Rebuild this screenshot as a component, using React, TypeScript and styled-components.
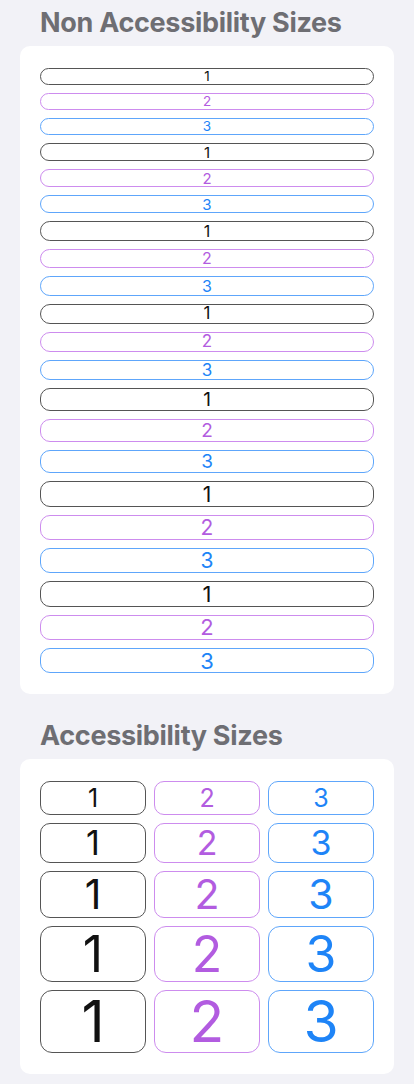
import React from "react";
import styled, { createGlobalStyle } from "styled-components";

const Global = createGlobalStyle`
  html, body { margin: 0; padding: 0; background: #f2f2f7; }
  body { font-family: Inter, "Noto Sans", sans-serif; -webkit-font-smoothing: antialiased; }
`;

const Page = styled.div`
  width: 414px;
  padding: 0 20px 10px;
  box-sizing: border-box;
  display: flex;
  flex-direction: column;
`;

const Title = styled.h2<{ $top: number }>`
  margin: ${(p) => p.$top}px 0 0;
  padding: 0 20px;
  font-size: 27px;
  line-height: 32px;
  font-weight: 700;
  color: #6e6e73;
  letter-spacing: -0.3px;
  white-space: nowrap;
`;

const Card = styled.div`
  margin-top: 7px;
  background: #ffffff;
  border-radius: 10px;
  padding: 22px 20px 21px;
`;

const List = styled.div`
  display: flex;
  flex-direction: column;
  gap: 8px;
`;

type Tone = "black" | "purple" | "blue";

const text: Record<Tone, string> = {
  black: "#111111",
  purple: "#b25ce0",
  blue: "#1e84f7",
};
const line: Record<Tone, string> = {
  black: "#555555",
  purple: "#cd8cee",
  blue: "#5ea6fb",
};

const Pill = styled.div<{ $h: number; $fs: number; $tone: Tone }>`
  box-sizing: border-box;
  height: ${(p) => p.$h}px;
  border: 1.3px solid ${(p) => line[p.$tone]};
  border-radius: ${(p) => Math.min(p.$h / 2, 10)}px;
  display: flex;
  align-items: center;
  justify-content: center;
  font-size: ${(p) => p.$fs}px;
  line-height: 1;
  color: ${(p) => text[p.$tone]};
`;

const Grid = styled.div`
  display: grid;
  grid-template-columns: repeat(3, 1fr);
  gap: 8px;
`;

const Box = styled.div<{ $h: number; $fs: number; $tone: Tone }>`
  box-sizing: border-box;
  height: ${(p) => p.$h}px;
  border: 1.3px solid ${(p) => line[p.$tone]};
  border-radius: ${(p) => (p.$h > 50 ? 12 : 10)}px;
  display: flex;
  align-items: center;
  justify-content: center;
  font-size: ${(p) => p.$fs}px;
  line-height: 1;
  color: ${(p) => text[p.$tone]};
`;

const tones: { tone: Tone; label: string }[] = [
  { tone: "black", label: "1" },
  { tone: "purple", label: "2" },
  { tone: "blue", label: "3" },
];

const small = [
  { h: 17, fs: 13.5 },
  { h: 18, fs: 15 },
  { h: 19.5, fs: 16 },
  { h: 20.3, fs: 17 },
  { h: 23, fs: 19 },
  { h: 25.3, fs: 21 },
  { h: 25.3, fs: 22 },
];

const large = [
  { h: 34, fs: 25 },
  { h: 40, fs: 34 },
  { h: 47, fs: 41 },
  { h: 56, fs: 50 },
  { h: 63, fs: 57 },
];

export default function App() {
  return (
    <>
      <Global />
      <Page>
        <Title $top={7}>Non Accessibility Sizes</Title>
        <Card>
          <List>
            {small.flatMap((s, i) =>
              tones.map((t) => (
                <Pill key={`${i}-${t.label}`} $h={s.h} $fs={s.fs} $tone={t.tone}>
                  {t.label}
                </Pill>
              ))
            )}
          </List>
        </Card>
        <Title $top={26}>Accessibility Sizes</Title>
        <Card>
          <Grid>
            {large.flatMap((s, i) =>
              tones.map((t) => (
                <Box key={`${i}-${t.label}`} $h={s.h} $fs={s.fs} $tone={t.tone}>
                  {t.label}
                </Box>
              ))
            )}
          </Grid>
        </Card>
      </Page>
    </>
  );
}
